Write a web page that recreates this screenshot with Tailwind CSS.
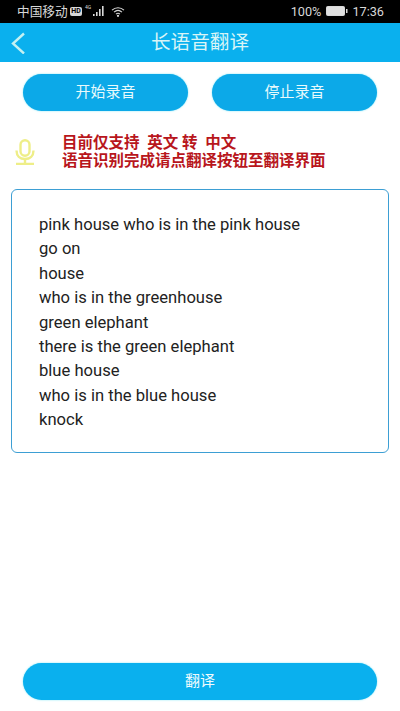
<!DOCTYPE html>
<html lang="zh-CN">
<head>
  <meta charset="UTF-8" />
  <meta name="viewport" content="width=device-width, initial-scale=1.0" />
  <title>长语音翻译</title>
  <script src="https://cdn.jsdelivr.net/npm/@tailwindcss/browser@4"></script>
</head>
<body class="bg-white font-['Roboto','Noto_Sans_CJK_SC',sans-serif]">
  <div class="flex flex-col w-[400px] h-[711px] overflow-hidden">
    <!-- status bar -->
    <div class="h-[23px] bg-black text-[#d8d8d8] text-[12.7px] flex items-center justify-between pl-[17px] pr-[16px] shrink-0">
      <div class="flex items-center gap-[2px]">
        <span>中国移动</span>
        <span class="bg-[#d8d8d8] text-black text-[7px] font-bold leading-[9px] px-[1.5px] rounded-[2px]">HD</span>
        <svg width="24" height="14" viewBox="0 0 24 14" fill="#d8d8d8">
          <text x="1" y="5" font-size="5" font-family="Roboto">4G</text>
          <rect x="9" y="10" width="1.6" height="2"/><rect x="12" y="8" width="1.6" height="4"/><rect x="15" y="5" width="1.6" height="7"/><rect x="18" y="2" width="1.6" height="10"/>
        </svg>
        <svg width="15" height="11" viewBox="0 0 15 11" fill="none" stroke="#d8d8d8" stroke-width="1.1" class="ml-[1px]">
          <path d="M1 4.2C4.5 .9 9.5 .9 13 4.2"/><path d="M3 6.2C5.5 4 8.5 4 11 6.2"/><path d="M5 8.2C6.3 7 7.7 7 9 8.2"/><circle cx="7" cy="9.8" r=".6" fill="#d8d8d8"/>
        </svg>
      </div>
      <div class="flex items-center gap-[4px]">
        <span>100%</span>
        <svg width="22" height="10" viewBox="0 0 22 10" class="ml-[1px]">
          <rect x=".5" y=".5" width="18" height="9" rx="1" fill="#e0e0e0" stroke="#d8d8d8"/><rect x="20" y="3" width="1.5" height="4" fill="#d8d8d8"/>
        </svg>
        <span>17:36</span>
      </div>
    </div>

    <!-- header -->
    <div class="relative h-[39px] bg-[#0ab0ee] flex items-center justify-center shrink-0">
      <svg class="absolute left-[10px] top-[9px]" width="16" height="22" viewBox="0 0 16 22" fill="none" stroke="#c4f1f2" stroke-width="2.4">
        <path d="M14 1.5L3 11.5l11 10"/>
      </svg>
      <span class="text-[#d9f5f7] text-[19.6px]">长语音翻译</span>
    </div>

    <!-- record buttons -->
    <div class="flex justify-between px-[23px] mt-[12px] shrink-0">
      <button class="w-[165px] h-[37px] rounded-full bg-[#0ca9e8] text-[#e8fafc] text-[15px] shadow-[0_0_2px_#7fe6f5]">开始录音</button>
      <button class="w-[165px] h-[37px] rounded-full bg-[#0ca9e8] text-[#e8fafc] text-[15px] shadow-[0_0_2px_#7fe6f5]">停止录音</button>
    </div>

    <!-- notice -->
    <div class="flex items-center mt-[23px] pl-[15px] shrink-0">
      <svg width="20" height="26" viewBox="0 0 20 26" fill="none" stroke="#eeee88" stroke-width="2.4">
        <rect x="5.5" y="1.2" width="9" height="15.5" rx="4.5"/>
        <path d="M1.5 11.5c0 5.5 3.5 8.5 8.5 8.5s8.5-3 8.5-8.5"/>
        <path d="M10 20v4M1 25h18"/>
      </svg>
      <div class="ml-[27px] text-[#b8161c] text-[15.5px] font-bold leading-[18px]">
        <p class="whitespace-pre">目前仅支持  英文 转  中文</p>
        <p>语音识别完成请点翻译按钮至翻译界面</p>
      </div>
    </div>

    <!-- recognised text -->
    <div class="mx-[11px] mt-[19px] h-[264px] rounded-[6px] border border-[#3d9fd4] pt-[23px] pl-[27px] text-[#222222] text-[16.6px] leading-[24.4px] shrink-0">
      <p>pink house who is in the pink house</p>
      <p>go on</p>
      <p>house</p>
      <p>who is in the greenhouse</p>
      <p>green elephant</p>
      <p>there is the green elephant</p>
      <p>blue house</p>
      <p>who is in the blue house</p>
      <p>knock</p>
    </div>

    <!-- translate -->
    <div class="mt-auto px-[23px] pb-[11px]">
      <button class="w-full h-[37px] rounded-full bg-[#0ab0ee] text-[#f0fbfd] text-[15px] shadow-[0_0_2px_#7fe6f5]">翻译</button>
    </div>
  </div>
</body>
</html>
